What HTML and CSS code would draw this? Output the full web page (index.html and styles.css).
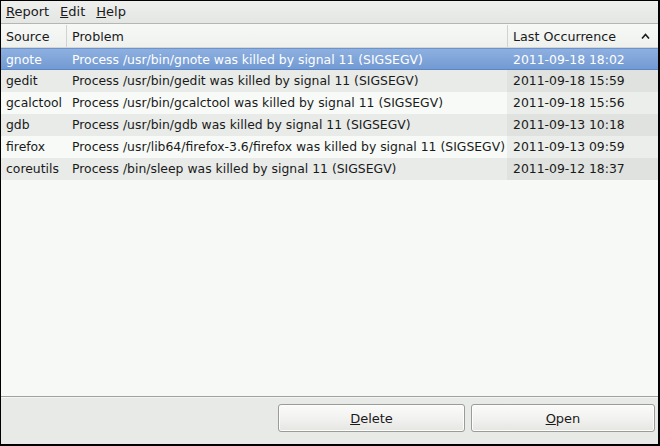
FILE: index.html
```html
<!DOCTYPE html>
<html>
<head>
<meta charset="utf-8">
<link rel="stylesheet" href="styles.css">
</head>
<body>
<div class="window">
  <div class="menubar">
    <span class="menu"><u>R</u>eport</span>
    <span class="menu"><u>E</u>dit</span>
    <span class="menu"><u>H</u>elp</span>
  </div>
  <div class="list">
    <div class="header">
      <div class="hc c1">Source</div>
      <div class="hc c2">Problem</div>
      <div class="hc c3">Last Occurrence<span class="arrow"><svg width="9" height="6" viewBox="0 0 9 6"><path d="M1 5.5 L4.5 1.5 L8 5.5" fill="none" stroke="#1a1a1a" stroke-width="1.6"/></svg></span></div>
    </div>
    <div class="row sel"><div class="c c1">gnote</div><div class="c c2">Process /usr/bin/gnote was killed by signal 11 (SIGSEGV)</div><div class="c c3">2011-09-18 18:02</div></div>
    <div class="row odd"><div class="c c1">gedit</div><div class="c c2">Process /usr/bin/gedit was killed by signal 11 (SIGSEGV)</div><div class="c c3">2011-09-18 15:59</div></div>
    <div class="row even"><div class="c c1">gcalctool</div><div class="c c2">Process /usr/bin/gcalctool was killed by signal 11 (SIGSEGV)</div><div class="c c3">2011-09-18 15:56</div></div>
    <div class="row odd"><div class="c c1">gdb</div><div class="c c2">Process /usr/bin/gdb was killed by signal 11 (SIGSEGV)</div><div class="c c3">2011-09-13 10:18</div></div>
    <div class="row even"><div class="c c1">firefox</div><div class="c c2">Process /usr/lib64/firefox-3.6/firefox was killed by signal 11 (SIGSEGV)</div><div class="c c3">2011-09-13 09:59</div></div>
    <div class="row odd"><div class="c c1">coreutils</div><div class="c c2">Process /bin/sleep was killed by signal 11 (SIGSEGV)</div><div class="c c3">2011-09-12 18:37</div></div>
    <div class="fill"></div>
  </div>
  <div class="buttons">
    <button class="btn delete"><u>D</u>elete</button>
    <button class="btn open"><u>O</u>pen</button>
  </div>
</div>
</body>
</html>
```
FILE: styles.css
```css
html, body {
  margin: 0;
  padding: 0;
  background: #000;
}
body {
  width: 660px;
  height: 446px;
  box-sizing: border-box;
  padding: 1px 2px 2px 1px;
  font-family: "DejaVu Sans", sans-serif;
  font-size: 13px;
  color: #1a1a1a;
}
.window {
  height: 443px;
  display: flex;
  flex-direction: column;
  background: #e7eae7;
}
.menubar {
  display: flex;
  align-items: center;
  padding-left: 5px;
  background: linear-gradient(#eef0ee, #e4e6e3);
  border-bottom: 1px solid #b4b6b3;
  box-sizing: border-box;
  height: 23px;
}
.menu {
  margin-right: 11px;
  padding-bottom: 1px;
}
.list {
  flex: 1;
  display: flex;
  flex-direction: column;
  background: #f6f9f6;
  border-bottom: 1px solid #9fa29f;
  box-shadow: 0 1px 0 #f4f6f4;
  font-size: 12.4px;
}
.header {
  height: 24px;
  display: flex;
  background: linear-gradient(#f7f9f7, #eef1ee);
  border-bottom: 1px solid #d4d7d4;
  box-sizing: border-box;
  padding-top: 1px;
  font-size: 12.7px;
}
.hc {
  display: flex;
  align-items: center;
  box-sizing: border-box;
}
.c1 { width: 65px; padding-left: 5px; box-sizing: border-box; }
.c2 { width: 441px; padding-left: 6px; box-sizing: border-box; }
.c3 { flex: 1; padding-left: 6px; box-sizing: border-box; }
.hc.c2, .hc.c3 { border-left: 1px solid #d0d3d0; padding-left: 5px; }
.hc.c3 { position: relative; }
.arrow {
  position: absolute;
  right: 8px;
  top: 8px;
  line-height: 0;
}
.row {
  height: 22px;
  display: flex;
  align-items: center;
  white-space: nowrap;
}
.c { height: 22px; line-height: 22px; overflow: hidden; }
.row.odd { background: #e8ebe8; }
.row.odd .c3 { background: #dfe2df; }
.row.even { background: #f7faf7; }
.row.even .c3 { background: #ebeeeb; }
.row.sel {
  background: linear-gradient(#8eb0e0, #729ad3);
  color: #fff;
  border-top: 1px solid #6d93cc;
  border-bottom: 1px solid #5e86c2;
  box-sizing: border-box;
}
.row.sel .c { height: 20px; line-height: 21px; }
.fill { flex: 1; }
.buttons {
  height: 47px;
  display: flex;
  justify-content: flex-end;
  align-items: flex-start;
  gap: 6px;
  padding-right: 3px;
  padding-top: 7px;
  box-sizing: border-box;
}
.btn {
  font-family: "DejaVu Sans", sans-serif;
  font-size: 13px;
  color: #1a1a1a;
  height: 28px;
  border: 1px solid #9a9c99;
  border-radius: 3px;
  background: linear-gradient(#fbfbfa, #f1f1ef 55%, #e5e5e2);
  box-shadow: inset 0 0 0 1px #fdfdfc;
  padding: 0;
}
.delete { width: 187px; }
.open { width: 184px; }
```
